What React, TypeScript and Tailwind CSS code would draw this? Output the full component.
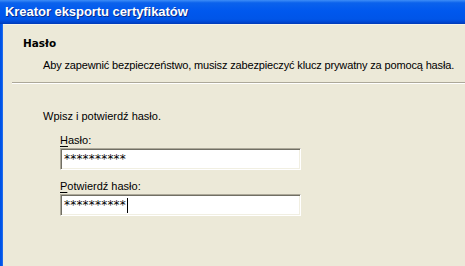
import React from 'react'

function PasswordField({ hotkey, rest, value, caret }: { hotkey: string; rest: string; value: string; caret?: boolean }) {
    return <div className="flex flex-col">
        <div className="h-[14px] leading-[14px]"><span className="underline underline-offset-2">{hotkey}</span>{rest}</div>
        <div className="mt-[1px] w-[241px] h-[22px] bg-white border border-t-[#ACA899] border-l-[#ACA899] border-r-white border-b-white shadow-[inset_1px_1px_0_#716F64,inset_-1px_-1px_0_#F1EFE2] flex items-center pl-[3px]">
            <span className="text-[12px] leading-[14px] tracking-[0.2px] font-['DejaVu_Sans',sans-serif]">{value}</span>
            {caret && <span className="w-[1px] h-[15px] bg-black ml-[1px]"></span>}
        </div>
    </div>
}

export default function App() {
    return <div className="w-[465px] h-[266px] overflow-hidden flex flex-col bg-[#ECE9D8] text-black text-[11px] font-['Liberation_Sans',Arial,sans-serif]">
        <div className="h-[24px] shrink-0 flex items-center px-[5px] bg-[linear-gradient(to_bottom,#3D8DF7_0%,#0B62EC_12%,#0058EE_45%,#0055E8_80%,#0046D2_92%,#003AB5_100%)]">
            <span className="text-white font-bold text-[13px] tracking-[-0.05px] [text-shadow:1px_1px_0_#0A2C8A] whitespace-nowrap">Kreator eksportu certyfikatów</span>
        </div>
        <div className="flex flex-1">
            <div className="w-[3px] shrink-0 bg-[linear-gradient(to_right,#0050E0_0%,#0058EE_66%,#3A7BE8_100%)]"></div>
            <div className="flex-1 flex flex-col">
                <div className="pt-[12px] pb-[10px] pl-[20px] flex flex-col gap-[7px] border-t border-[#F5F3EA]">
                    <div className="font-bold h-[14px] leading-[14px] font-['DejaVu_Sans',sans-serif] text-[11px] scale-x-[0.95] origin-left">Hasło</div>
                    <div className="pl-[20px] h-[14px] leading-[14px] whitespace-nowrap tracking-[-0.15px]">Aby zapewnić bezpieczeństwo, musisz zabezpieczyć klucz prywatny za pomocą hasła.</div>
                </div>
                <div className="ml-[9px] h-[2px] border-t border-[#ACA899] border-b border-b-white"></div>
                <div className="pl-[40px] pt-[25px] flex flex-col">
                    <div className="h-[14px] leading-[14px]">Wpisz i potwierdź hasło.</div>
                    <div className="pl-[17px] pt-[10px] flex flex-col gap-[9px]">
                        <PasswordField hotkey="H" rest="asło:" value="**********" />
                        <PasswordField hotkey="P" rest="otwierdź hasło:" value="**********" caret />
                    </div>
                </div>
            </div>
        </div>
    </div>
}
